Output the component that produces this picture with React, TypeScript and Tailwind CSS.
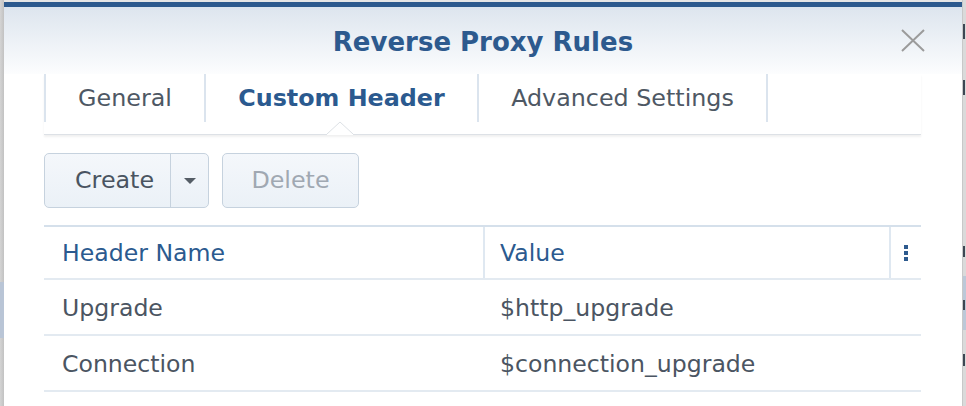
import React from 'react';

const tabs = [
  { label: 'General', active: false, width: 'w-[160px]' },
  { label: 'Custom Header', active: true, width: 'w-[273px]' },
  { label: 'Advanced Settings', active: false, width: 'w-[291px] border-r-2' },
];

const rows = [
  { name: 'Upgrade', value: '$http_upgrade' },
  { name: 'Connection', value: '$connection_upgrade' },
];

// segments of the window peeking out behind the modal on the right
const rightEdge = [
  { h: 25 },
  { h: 15, mark: true },
  { h: 42 },
  { h: 15, mark: true },
  { h: 155 },
  { h: 11, mark: true },
  { h: 20 },
  { h: 24, blue: true },
  { h: 11, mark: true, blue: true },
  { h: 20, blue: true },
  { h: 25 },
  { h: 12, mark: true },
  { h: 41 },
];

function CloseIcon() {
  return (
    <svg width="26" height="23" viewBox="0 0 26 23" fill="none">
      <path d="M2 1 L24 22 M24 1 L2 22" stroke="#9b9b9b" strokeWidth="2" />
    </svg>
  );
}

export default function App() {
  return (
    <div className="w-[966px] h-[406px] flex overflow-hidden bg-[#e6e6e6] font-['DejaVu_Sans',sans-serif]">
      {/* left backdrop sliver */}
      <div className="w-[4px] flex flex-col bg-gradient-to-r from-[#d4d4d4] to-[#c2c2c2]">
        <div className="h-[282px]" />
        <div className="h-[56px] bg-[#b9c5d6]" />
      </div>

      {/* modal */}
      <div className="w-[958px] mt-[2px] flex flex-col bg-white border-t-[5px] border-[#2d5a8e]">
        <div className="relative h-[67px] flex items-center justify-center bg-gradient-to-b from-[#dde5ee] to-[#fcfdfe]">
          <h2 className="text-[26px] font-bold text-[#2d5a8e] leading-none mt-[2px]">Reverse Proxy Rules</h2>
          <button className="absolute right-[36px] top-[22px]">
            <CloseIcon />
          </button>
        </div>

        <div className="pl-[40px] pr-[41px]">
          {/* tabs */}
          <div className="relative flex pb-[12px] border-b border-[#dde1e6] shadow-[0_2px_2px_rgba(0,0,0,0.06)]">
            {tabs.map((tab) => (
              <div
                key={tab.label}
                className={`${tab.width} h-[48px] flex items-center justify-center pt-[1px] border-l-2 border-[#dbe4ee] text-[23.8px] ${
                  tab.active ? 'font-bold text-[#2b5a8f]' : 'text-[#4e5864]'
                }`}
              >
                {tab.label}
              </div>
            ))}
            <svg
              className="absolute left-[283px] bottom-[-1px]"
              width="26"
              height="14"
              viewBox="0 0 26 14"
            >
              <path d="M0 13 L13 1 L26 13" fill="white" stroke="#dde1e6" strokeWidth="1" />
              <rect x="0" y="13" width="26" height="1" fill="white" />
            </svg>
          </div>

          {/* toolbar */}
          <div className="flex gap-[13px] mt-[18px] text-[23.8px]">
            <div className="flex h-[55px] rounded-[5px] border border-[#c6d2de] bg-gradient-to-b from-[#f4f7fb] to-[#ebf1f7]">
              <button className="w-[125px] text-left pl-[30px] text-[#4a5461]">Create</button>
              <button className="w-[38px] flex items-center justify-center border-l border-[#c6d2de]">
                <svg width="12" height="6" viewBox="0 0 12 6">
                  <path d="M0 0 L12 0 L6 6 Z" fill="#555d66" />
                </svg>
              </button>
            </div>
            <button className="w-[137px] h-[55px] rounded-[5px] border border-[#c6d2de] bg-gradient-to-b from-[#f4f7fb] to-[#ebf1f7] text-[#a0a8b2]">
              Delete
            </button>
          </div>

          {/* table */}
          <div className="mt-[17px] text-[23.6px]">
            <div className="grid grid-cols-[439px_406px_32px] h-[55px] border-t-2 border-b-2 border-t-[#d5e0eb] border-b-[#e3eaf1] text-[#2b5a8f]">
              <div className="flex items-center pl-[18px] pt-[2px]">Header Name</div>
              <div className="flex items-center pl-[15px] pt-[2px] border-l-2 border-[#dfe8f1]">Value</div>
              <div className="flex items-center justify-center border-l-2 border-[#dfe8f1]">
                <div className="flex flex-col gap-[2px]">
                  <span className="w-[4px] h-[4px] bg-[#2d5a8e]" />
                  <span className="w-[4px] h-[4px] bg-[#2d5a8e]" />
                  <span className="w-[4px] h-[4px] bg-[#2d5a8e]" />
                </div>
              </div>
            </div>
            {rows.map((row) => (
              <div
                key={row.name}
                className="grid grid-cols-[439px_438px] h-[56px] pt-[3px] border-b-2 border-[#e3eaf1] text-[#4b5562]"
              >
                <div className="flex items-center pl-[18px]">{row.name}</div>
                <div className="flex items-center pl-[17px]">{row.value}</div>
              </div>
            ))}
          </div>
        </div>
      </div>

      {/* right backdrop sliver */}
      <div className="w-[4px] flex flex-col bg-[#dadada] border-l border-[#c8c8c8]">
        {rightEdge.map((seg, i) => (
          <div
            key={i}
            style={{ height: seg.h }}
            className={seg.blue ? 'bg-[#bcc8d8]' : ''}
          >
            {seg.mark && <div className="w-[2px] h-full bg-[#3d4753]" />}
          </div>
        ))}
      </div>
    </div>
  );
}
